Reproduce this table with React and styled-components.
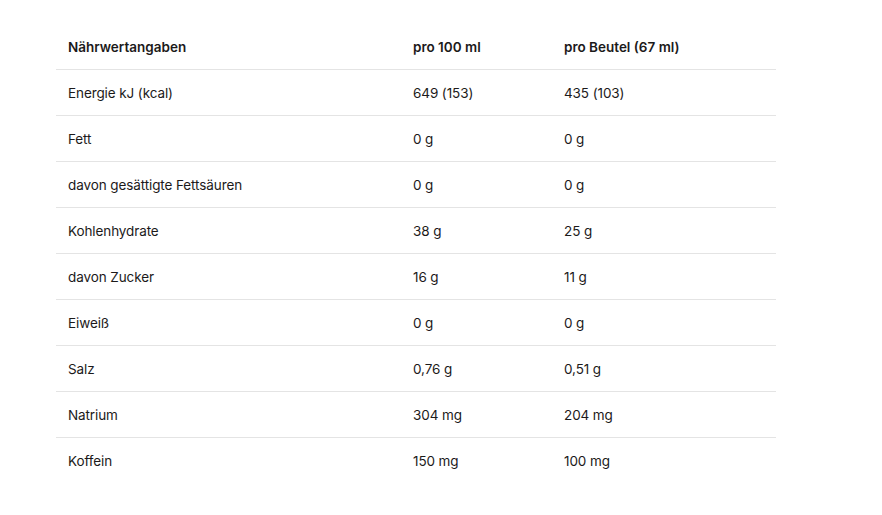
import React from "react";
import styled, { createGlobalStyle } from "styled-components";

const GlobalStyle = createGlobalStyle`
  body {
    margin: 0;
    background: #ffffff;
    font-family: "Inter", "Open Sans", sans-serif;
    color: #1c1a1a;
  }
`;

const Page = styled.div`
  padding: 23px 0 0 56px;
`;

const Table = styled.table`
  width: 720px;
  border-collapse: collapse;
  font-size: 14px;
  table-layout: fixed;
`;

const Th = styled.th`
  box-sizing: border-box;
  width: ${(p) => p.$w}px;
  height: 46px;
  padding: 2px 12px 0;
  text-align: left;
  font-weight: 600;
  font-size: 13.5px;
  letter-spacing: 0;
  border-bottom: 1px solid #e4e4e4;
`;

const Row = styled.tr`
  border-bottom: 1px solid #e4e4e4;
  &:last-child {
    border-bottom: none;
  }
`;

const Td = styled.td`
  box-sizing: border-box;
  height: 46px;
  padding: 2px 12px 0;
  font-weight: 400;
  font-size: 13.5px;
  letter-spacing: -0.1px;
`;

const rows = [
  ["Energie kJ (kcal)", "649 (153)", "435 (103)"],
  ["Fett", "0 g", "0 g"],
  ["davon gesättigte Fettsäuren", "0 g", "0 g"],
  ["Kohlenhydrate", "38 g", "25 g"],
  ["davon Zucker", "16 g", "11 g"],
  ["Eiweiß", "0 g", "0 g"],
  ["Salz", "0,76 g", "0,51 g"],
  ["Natrium", "304 mg", "204 mg"],
  ["Koffein", "150 mg", "100 mg"],
];

export default function App() {
  return (
    <>
      <GlobalStyle />
      <Page>
        <Table>
          <thead>
            <tr>
              <Th $w={345}>Nährwertangaben</Th>
              <Th $w={151}>pro 100 ml</Th>
              <Th $w={224}>pro Beutel (67 ml)</Th>
            </tr>
          </thead>
          <tbody>
            {rows.map((r) => (
              <Row key={r[0]}>
                {r.map((c, i) => (
                  <Td key={i}>{c}</Td>
                ))}
              </Row>
            ))}
          </tbody>
        </Table>
      </Page>
    </>
  );
}
